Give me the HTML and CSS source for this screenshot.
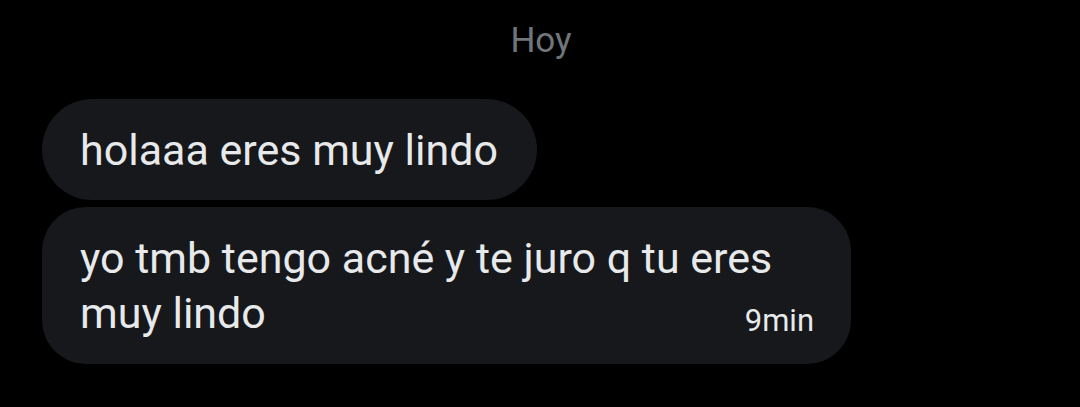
FILE: index.html
```html
<!DOCTYPE html>
<html lang="es">
<head>
<meta charset="utf-8">
<title>Mensajes</title>
<link rel="stylesheet" href="styles.css">
</head>
<body>
<main class="thread">
  <div class="day">Hoy</div>
  <div class="messages">
    <div class="bubble bubble-pill"><span class="text">holaaa eres muy lindo</span></div>
    <div class="bubble bubble-last"><span class="text">yo tmb tengo acné y te juro q tu eres muy lindo</span><span class="time">9min</span></div>
  </div>
</main>
</body>
</html>
```

FILE: styles.css
```css
* {
  box-sizing: border-box;
}

html,
body {
  margin: 0;
  height: 100%;
  background: #000;
}

body {
  font-family: Roboto, "Noto Sans", "Liberation Sans", sans-serif;
  color: #e7e9ea;
}

.thread {
  padding: 21px 0 0 42px;
  width: 1080px;
}

.day {
  font-size: 35px;
  line-height: 40px;
  color: #71767b;
  text-align: center;
  margin-left: -40px;
}

.messages {
  margin-top: 38px;
  display: flex;
  flex-direction: column;
  align-items: flex-start;
  gap: 7px;
}

.bubble {
  background: #16181c;
  font-size: 43px;
  line-height: 55px;
  padding: 24px 39px 22px 38px;
  max-width: 809px;
}

.bubble-pill {
  border-radius: 51px;
}

.bubble-last {
  border-radius: 44px;
  padding: 24px 37px 23px 38px;
  width: 809px;
}

/* timestamp sits at the right end of the last text line */
.time {
  float: right;
  font-size: 31px;
  line-height: 36px;
  margin-top: 17px;
}
```
